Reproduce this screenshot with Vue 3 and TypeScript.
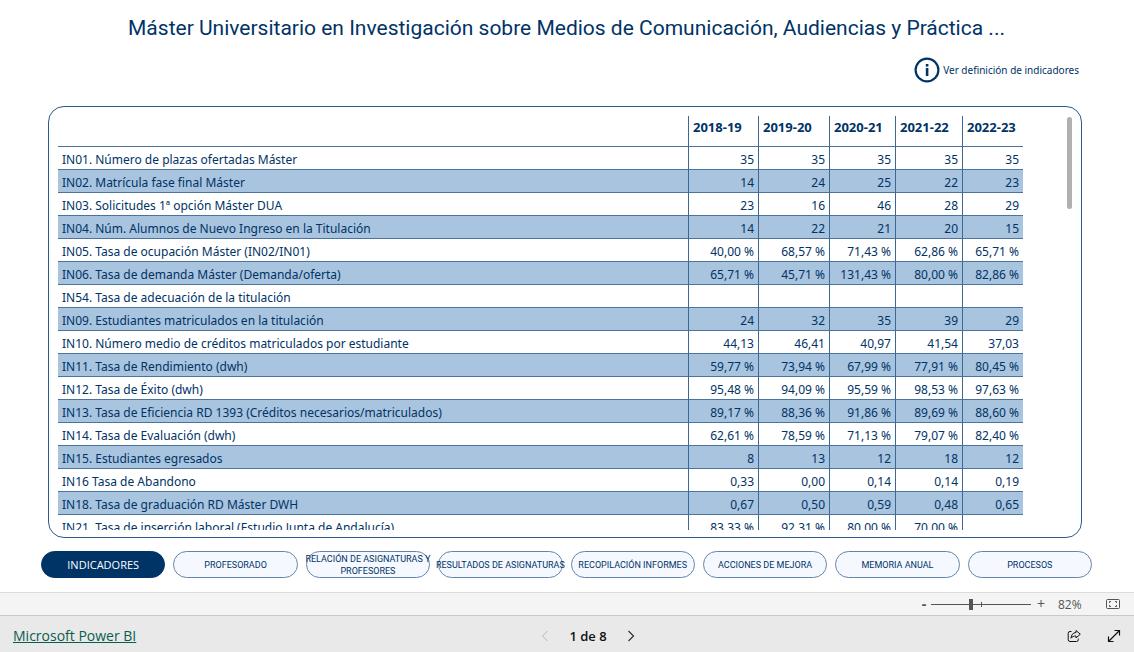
<script setup lang="ts">
import { ref } from 'vue'

interface Indicator {
  name: string
  values: string[]
}

const years: string[] = ['2018-19', '2019-20', '2020-21', '2021-22', '2022-23']

const indicators: Indicator[] = [
  { name: 'IN01. Número de plazas ofertadas Máster', values: ['35', '35', '35', '35', '35'] },
  { name: 'IN02. Matrícula fase final Máster', values: ['14', '24', '25', '22', '23'] },
  { name: 'IN03. Solicitudes 1ª opción Máster DUA', values: ['23', '16', '46', '28', '29'] },
  { name: 'IN04. Núm. Alumnos de Nuevo Ingreso en la Titulación', values: ['14', '22', '21', '20', '15'] },
  { name: 'IN05. Tasa de ocupación Máster (IN02/IN01)', values: ['40,00 %', '68,57 %', '71,43 %', '62,86 %', '65,71 %'] },
  { name: 'IN06. Tasa de demanda Máster (Demanda/oferta)', values: ['65,71 %', '45,71 %', '131,43 %', '80,00 %', '82,86 %'] },
  { name: 'IN54. Tasa de adecuación de la titulación', values: ['', '', '', '', ''] },
  { name: 'IN09. Estudiantes matriculados en la titulación', values: ['24', '32', '35', '39', '29'] },
  { name: 'IN10. Número medio de créditos matriculados por estudiante', values: ['44,13', '46,41', '40,97', '41,54', '37,03'] },
  { name: 'IN11. Tasa de Rendimiento (dwh)', values: ['59,77 %', '73,94 %', '67,99 %', '77,91 %', '80,45 %'] },
  { name: 'IN12. Tasa de Éxito (dwh)', values: ['95,48 %', '94,09 %', '95,59 %', '98,53 %', '97,63 %'] },
  { name: 'IN13. Tasa de Eficiencia RD 1393 (Créditos necesarios/matriculados)', values: ['89,17 %', '88,36 %', '91,86 %', '89,69 %', '88,60 %'] },
  { name: 'IN14. Tasa de Evaluación (dwh)', values: ['62,61 %', '78,59 %', '71,13 %', '79,07 %', '82,40 %'] },
  { name: 'IN15. Estudiantes egresados', values: ['8', '13', '12', '18', '12'] },
  { name: 'IN16 Tasa de Abandono', values: ['0,33', '0,00', '0,14', '0,14', '0,19'] },
  { name: 'IN18. Tasa de graduación RD Máster DWH', values: ['0,67', '0,50', '0,59', '0,48', '0,65'] },
  { name: 'IN21. Tasa de inserción laboral (Estudio Junta de Andalucía)', values: ['83,33 %', '92,31 %', '80,00 %', '70,00 %', ''] },
]

const tabs: string[] = [
  'INDICADORES',
  'PROFESORADO',
  'RELACIÓN DE ASIGNATURAS Y\nPROFESORES',
  'RESULTADOS DE ASIGNATURAS',
  'RECOPILACIÓN INFORMES',
  'ACCIONES DE MEJORA',
  'MEMORIA ANUAL',
  'PROCESOS',
]

const activeTab = ref(0)
const zoom = ref(82)
</script>

<template>
  <div class="page">
    <main class="report">
      <h1 class="title">Máster Universitario en Investigación sobre Medios de Comunicación, Audiencias y Práctica ...</h1>

      <div class="info-row">
        <a class="info" href="#definiciones">
          <svg class="info-icon" viewBox="0 0 26 26" aria-hidden="true">
            <circle cx="13" cy="13" r="11.4" fill="none" stroke="#003366" stroke-width="2.2" />
            <rect x="11.8" y="7" width="2.6" height="2.6" fill="#003366" />
            <rect x="11.8" y="11" width="2.6" height="8" fill="#003366" />
          </svg>
          <span>Ver definición de indicadores</span>
        </a>
      </div>

      <section class="card" aria-label="Indicadores">
        <div class="viewport">
          <table>
            <colgroup>
              <col />
              <col class="c-1" />
              <col class="c-2" />
              <col class="c-3" />
              <col class="c-4" />
              <col class="c-5" />
            </colgroup>
            <thead>
              <tr>
                <td></td>
                <th v-for="y in years" :key="y" scope="col">{{ y }}</th>
              </tr>
            </thead>
            <tbody>
              <tr v-for="row in indicators" :key="row.name">
                <th scope="row">{{ row.name }}</th>
                <td v-for="(v, i) in row.values" :key="i">{{ v }}</td>
              </tr>
            </tbody>
          </table>
        </div>
        <div class="scroll"><div class="scroll-thumb"></div></div>
      </section>

      <nav class="tabs" aria-label="Secciones">
        <button
          v-for="(t, i) in tabs"
          :key="t"
          type="button"
          class="tab"
          :class="{ active: i === activeTab }"
          @click="activeTab = i"
        >
          <span>{{ t }}</span>
        </button>
      </nav>
    </main>

    <div class="zoombar">
      <button type="button" class="step" aria-label="Reducir">-</button>
      <input v-model="zoom" class="slider" type="range" min="10" max="190" aria-label="Zoom" />
      <button type="button" class="step" aria-label="Ampliar">+</button>
      <span class="percent">{{ zoom }}%</span>
      <button type="button" class="icon-button" aria-label="Ajustar a la página">
        <svg width="14" height="12" viewBox="0 0 14 12" fill="none" stroke="#555" aria-hidden="true">
          <rect x="0.5" y="1.5" width="13" height="9" rx="1" />
          <path d="M5 3.5H3.5V5M3.5 7v1.5H5M9 3.5h1.5V5M10.500 7v1.500H9" />
        </svg>
      </button>
    </div>

    <footer class="footer">
      <a class="brand" href="#powerbi">Microsoft Power BI</a>
      <div class="pager">
        <button type="button" class="icon-button" aria-label="Página anterior" disabled>
          <svg width="8" height="12" viewBox="0 0 8 12" fill="none" stroke="#b8b8b8" aria-hidden="true">
            <path d="M6.500 1L1.500 6l5 5" />
          </svg>
        </button>
        <span class="page-number">1 de 8</span>
        <button type="button" class="icon-button" aria-label="Página siguiente">
          <svg width="8" height="12" viewBox="0 0 8 12" fill="none" stroke="#333" stroke-width="1.2" aria-hidden="true">
            <path d="M1.500 1l5 5-5 5" />
          </svg>
        </button>
      </div>
      <div class="actions">
        <button type="button" class="icon-button" aria-label="Compartir">
          <svg width="14" height="14" viewBox="0 0 14 14" fill="none" stroke="#111" stroke-linejoin="round" aria-hidden="true">
            <path d="M4.500 2.500H3A1.800 1.800 0 0 0 1.200 4.300v6.400a1.800 1.800 0 0 0 1.800 1.800h6.500a1.800 1.800 0 0 0 1.800-1.800V9.500" />
            <path d="M9 1.500L13.300 5.200 9 8.900V7C6.800 7 5.200 7.600 4 9.200 4.200 5.900 6 3.700 9 3.500z" />
          </svg>
        </button>
        <button type="button" class="icon-button" aria-label="Pantalla completa">
          <svg width="14" height="14" viewBox="0 0 14 14" fill="none" stroke="#111" stroke-width="1.2" aria-hidden="true">
            <path d="M1.500 12.500l11-11M7.500 1.500h5v5M1.500 7.500v5h5" />
          </svg>
        </button>
      </div>
    </footer>
  </div>
</template>

<style>
body {
  background: #fff;
}
</style>

<style scoped>
.page {
  display: flex;
  flex-direction: column;
  height: 100vh;
  color: #003366;
  font-family: 'Noto Sans', 'Open Sans', sans-serif;
}

button {
  font-family: inherit;
  cursor: pointer;
}

.report {
  display: flex;
  flex: 1;
  flex-direction: column;
  min-height: 0;
  padding: 12px 42px 14px 41px;
}

.title {
  margin: 0;
  font: 400 21px/32px Roboto, sans-serif;
  text-align: center;
  white-space: nowrap;
}

.info-row {
  display: flex;
  justify-content: flex-end;
  padding: 13px 13px 0 0;
}

.info {
  display: flex;
  align-items: center;
  gap: 3px;
  color: inherit;
  font-size: 10px;
  line-height: 26px;
  text-decoration: none;
}

.info-icon {
  width: 26px;
  height: 26px;
}

.card {
  display: flex;
  flex: 1;
  min-height: 0;
  margin: 23px 10px 0 7px;
  padding: 9px 9px 7px;
  border: 1px solid #2c5a8a;
  border-radius: 16px;
}

.viewport {
  flex: 1;
  overflow: hidden;
}

.scroll {
  width: 5px;
  margin-left: 44px;
  padding-top: 1px;
}

.scroll-thumb {
  height: 92px;
  border-radius: 3px;
  background: #b0b0b0;
}

table {
  width: 100%;
  border-spacing: 0;
  table-layout: fixed;
  font-size: 12px;
  line-height: 18px;
}

.c-1 {
  width: 70px;
}

.c-2 {
  width: 71px;
}

.c-3 {
  width: 66px;
}

.c-4 {
  width: 67px;
}

.c-5 {
  width: 61px;
}

th,
td {
  padding: 4px 4px 0;
  white-space: nowrap;
}

thead th,
thead td {
  height: 28px;
  padding-top: 2px;
  vertical-align: top;
  text-align: left;
  font-size: 13px;
  font-weight: 700;
}

tbody th,
tbody td {
  height: 18px;
  border-top: 1px solid #4a739d;
  font-weight: 400;
  text-align: right;
}

tbody th {
  text-align: left;
}

thead th,
tbody td {
  border-left: 1px solid #3d6893;
}

tbody tr:nth-child(even) {
  background: #a8c4df;
}

.tabs {
  display: flex;
  gap: 8px;
  margin-top: 13px;
}

.tab {
  display: flex;
  flex: 1 1 0;
  align-items: center;
  justify-content: center;
  min-width: 0;
  height: 27px;
  padding: 0;
  border: 1px solid #6485a8;
  border-radius: 14px;
  background: #f5f9ff;
  color: #003366;
  font-family: Roboto, sans-serif;
  font-size: 9px;
  line-height: 12px;
  white-space: pre;
}

.tab.active {
  border-color: #003366;
  background: #003366;
  color: #fff;
  font-family: 'Open Sans', sans-serif;
  font-size: 11px;
}

.zoombar {
  display: flex;
  align-items: center;
  justify-content: flex-end;
  height: 22px;
  padding-right: 14px;
  border-top: 1px solid #dcdcdc;
  background: #f4f4f4;
  color: #555;
  font-family: 'Open Sans', sans-serif;
  font-size: 12px;
}

.step {
  width: 20px;
  padding: 0;
  border: 0;
  background: none;
  color: #555;
  font-size: 14px;
  line-height: 20px;
}

.step:first-child {
  width: 14px;
  font-weight: 700;
}

.slider {
  width: 100px;
  height: 12px;
  margin: 0;
  appearance: none;
  background:
    linear-gradient(#555, #555) 50px 50% / 1px 5px no-repeat,
    linear-gradient(#555, #555) 0 50% / 100% 1px no-repeat;
}

.slider::-webkit-slider-thumb {
  width: 4px;
  height: 11px;
  appearance: none;
  background: #555;
}

.percent {
  width: 36px;
  padding-left: 7px;
}

.icon-button {
  display: flex;
  padding: 0;
  border: 0;
  background: none;
}

.zoombar .icon-button {
  margin-left: 12px;
}

.footer {
  display: grid;
  grid-template-columns: 1fr auto 1fr;
  align-items: center;
  height: 37px;
  padding: 3px 13px 0;
  border-top: 1px solid #c8c8c8;
  background: #e9e9e9;
  box-sizing: border-box;
  font-family: 'Open Sans', sans-serif;
}

.brand {
  justify-self: start;
  color: #0b5c4f;
  font-size: 14px;
  line-height: 20px;
}

.pager {
  display: flex;
  align-items: center;
  gap: 20px;
  padding-left: 42px;
}

.page-number {
  color: #111;
  font-size: 13px;
  font-weight: 600;
  line-height: 20px;
}

.actions {
  display: flex;
  justify-content: flex-end;
  gap: 26px;
}
</style>
